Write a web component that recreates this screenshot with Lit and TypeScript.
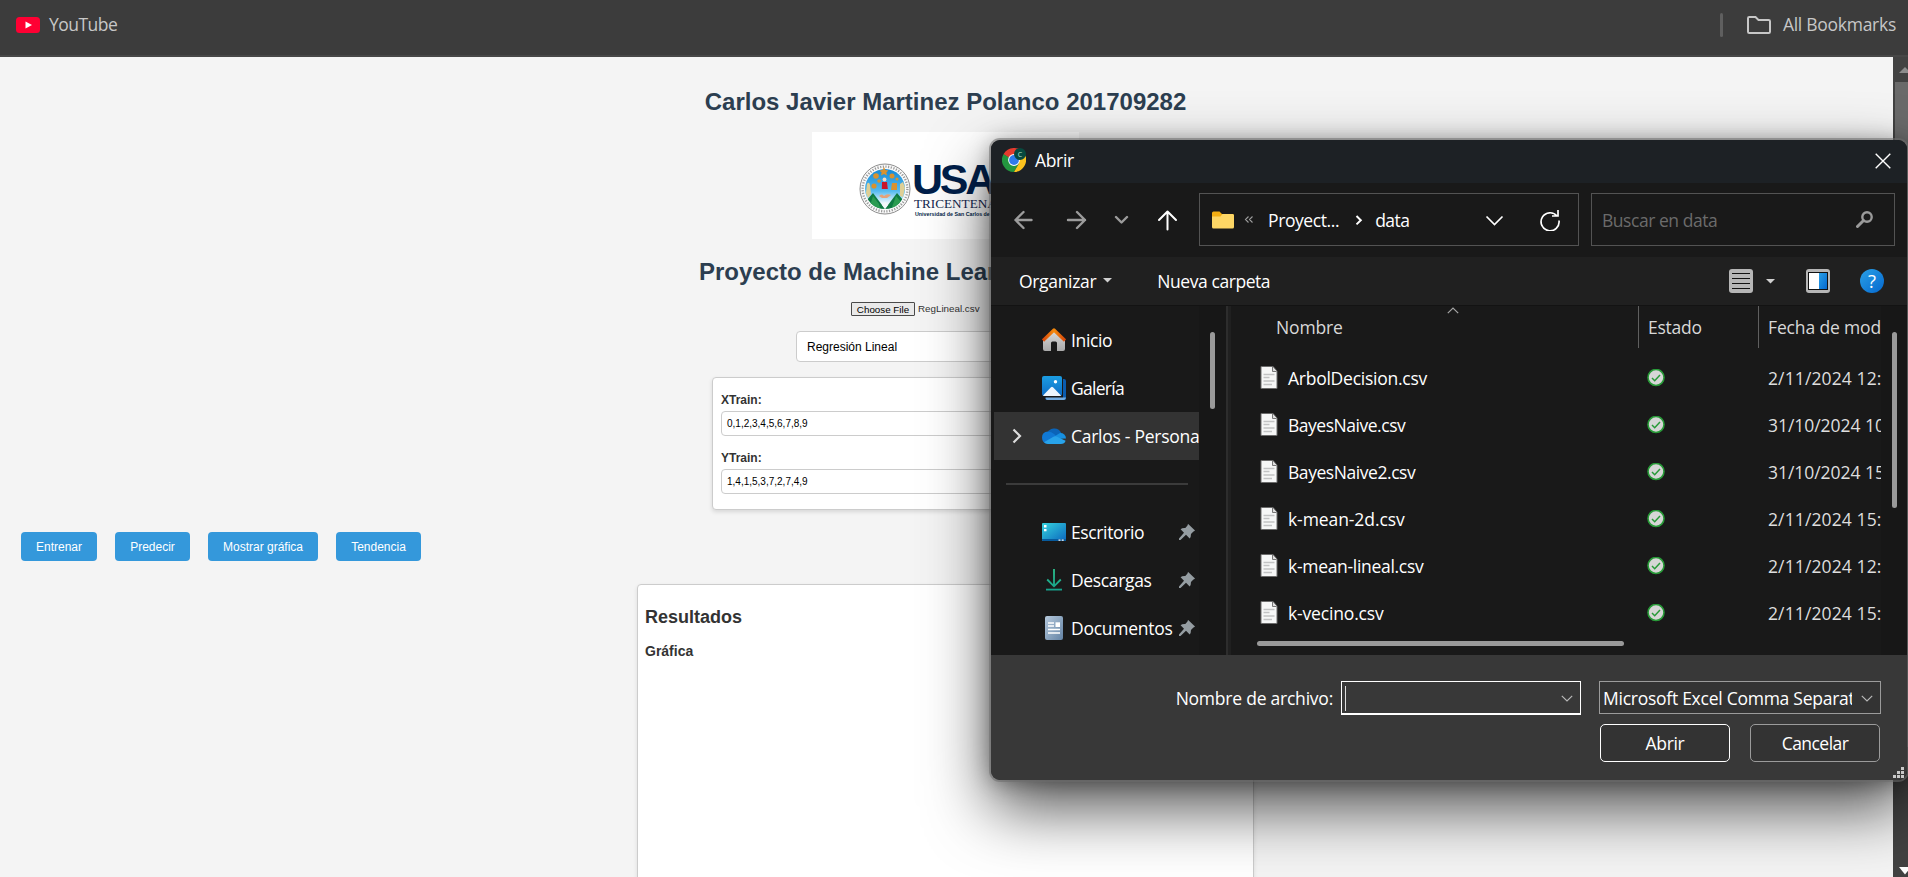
import { LitElement, html, css, svg } from "lit";
import { customElement } from "lit/decorators.js";
import { styleMap } from "lit/directives/style-map.js";

const UI = '17.5px "Open Sans"';
const ctx = document.createElement("canvas").getContext("2d")!;

/* Tracking that makes `sample` span `width` pixels of ink. */
const tracking = (sample: string, width: number, font = UI) => {
  ctx.font = font;
  const m = ctx.measureText(sample);
  const ink = m.actualBoundingBoxLeft + m.actualBoundingBoxRight;
  return ((width - ink) / (sample.length - 1)).toFixed(3) + "px";
};
const label = (text: string, width: number, sample = text) =>
  html`<span class="label" style=${styleMap({ letterSpacing: tracking(sample, width) })}>${text}</span>`;

const shared = css`
  :host { display: block; box-sizing: border-box; }
  *, *::before, *::after { box-sizing: border-box; }
  svg { display: block; flex: none; }
  .label { white-space: pre; }
`;

@customElement("bookmarks-bar")
class BookmarksBar extends LitElement {
  static styles = [shared, css`
    :host { height: 57px; background: #3c3c3c; border-bottom: 2px solid #474747; display: flex; align-items: center; padding: 0 12px 5px 16px; color: #c7c7c7; font: 17.5px/24px "Open Sans", sans-serif; }
    .yt { margin-right: 9px; }
    .spacer { flex: 1; }
    .sep { width: 3px; height: 24px; border-radius: 2px; background: #5f5f5f; margin-right: 24px; }
    .folder { margin-right: 12px; }
    .label { margin-top: -2px; }
  `];
  render() {
    return html`
      <svg class="yt" width="24" height="16" viewBox="0 0 24 16"><rect width="24" height="16" rx="3.5" fill="#ff0033"/><path d="M9.5 4.6v6.8L16 8z" fill="#fff"/></svg>
      ${label("YouTube", 68)}
      <span class="spacer"></span>
      <span class="sep"></span>
      <svg class="folder" width="24" height="18" viewBox="0 0 24 18" fill="none" stroke="#c7c7c7" stroke-width="2"><path d="M1 2.2Q1 1 2.2 1H8.5L11.5 4H21.6Q23 4 23 5.2V15.8Q23 17 21.8 17H2.2Q1 17 1 15.8Z"/></svg>
      ${label("All Bookmarks", 113)}`;
  }
}

@customElement("usac-logo")
class UsacLogo extends LitElement {
  static styles = [shared, css`
    :host { width: 267px; height: 107px; background: #fff; display: flex; padding: 31px 0 0 47px; overflow: hidden; }
    .words { margin-left: 3px; color: #001f4a; white-space: nowrap; }
    .big { font: bold 43px/33px "Liberation Sans", Arial, sans-serif; letter-spacing: -3.2px; margin-left: -2px; }
    .mid { font: 13.2px/12px "Liberation Serif", serif; color: #14284f; margin-top: 2px; }
    .small { font: bold 5.3px/8px "Liberation Sans", Arial, sans-serif; margin-left: 1px; }
  `];
  render() {
    return html`
      <svg width="52" height="52" viewBox="0 0 52 52">
        <defs><linearGradient id="s" x1="0" y1="0" x2="0" y2="1"><stop offset="0" stop-color="#1288d6"/><stop offset=".55" stop-color="#55baf0"/><stop offset=".85" stop-color="#eaf6fd"/></linearGradient>
        <clipPath id="c"><circle cx="26" cy="26" r="20"/></clipPath></defs>
        <circle cx="26" cy="26" r="25" fill="#fafafa" stroke="#8d8d8d" stroke-width="1"/>
        <circle cx="26" cy="26" r="22.4" fill="none" stroke="#9b9b9b" stroke-width="2.4" stroke-dasharray="1.2 1.5"/>
        <circle cx="26" cy="26" r="20" fill="url(#s)"/>
        <g clip-path="url(#c)"><path d="M2 44 14 30 26 46 38 30 50 44V52H2Z" fill="#0e7a43"/><path d="M14 33 20 41 23 52H8ZM37 33 43 40 41 50 33 44Z" fill="#2c9c52"/><path d="M23 42 26 39 29 42 26 46Z" fill="#f2f8fb"/></g>
        <g fill="#d9922f"><path d="m25 4 1.4 3 3 .4-2 2 .5 3-2.900-1.500L22 12.400l.6-3-2.200-2 3.200-.4z"/><circle cx="17" cy="13" r="2.800"/><circle cx="33" cy="13" r="2.500"/><circle cx="15" cy="23" r="2.600"/><path d="M33 20h5v7h-6z"/><circle cx="20" cy="18" r="1.800"/><circle cx="38" cy="16" r="1.500"/></g>
        <path d="M8 21q2-3 3 1l1 9-3 4-2-5zM41 21l3-2 2 6-2 9-3-1z" fill="#dfcf95"/>
        <circle cx="25.500" cy="16.500" r="1.900" fill="#f4dcc6"/><path d="M23 19h5l.8 7h-6z" fill="#c8152b"/><path d="M20 33q3-3 5 0 3-3 7-1l-4 3h-5z" fill="#e5a27a"/>
      </svg>
      <div class="words"><div class="big">USAC</div><div class="mid">TRICENTENARIA</div><div class="small">Universidad de San Carlos de Guatemala</div></div>`;
  }
}

@customElement("ml-page")
class MlPage extends LitElement {
  static styles = [shared, css`
    :host { flex: 1; background: #f4f4f4; padding-top: 31px; height: 820px; overflow: hidden; color: #333; font: 12px/14px "Liberation Sans", Arial, sans-serif; }
    h1, h2, h3, h4 { margin: 0; white-space: nowrap; }
    h1, h2 { color: #2c3e50; font-size: 24px; line-height: 28px; }
    h1 { width: 1891px; text-align: center; }
    .logo { margin: 16px 0 0 812px; }
    h2 { margin: 19px 0 0 699px; }
    .file { margin: 16px 0 0 851px; display: flex; gap: 3px; font-size: 9.8px; line-height: 14px; }
    .choose { border: 1px solid #4a4a4a; border-radius: 1px; background: #e9e9e9; color: #000; width: 64px; height: 14px; text-align: center; line-height: 13px; }
    .select { margin: 15px 0 0 796px; width: 299px; height: 31px; border: 1px solid #ccc; border-radius: 4px; background: #fff; color: #000; padding-left: 10px; line-height: 30px; }
    .form { margin: 15px 0 0 712px; width: 467px; height: 133px; border: 1px solid #ccc; border-radius: 4px; background: #fff; box-shadow: 0 2px 4px rgba(0,0,0,.12); padding: 15px 8px; }
    .field { margin-bottom: 15px; }
    .name { font-weight: bold; }
    .input { margin-top: 4px; height: 25px; border: 1px solid #ccc; border-radius: 4px; color: #000; font-size: 10px; line-height: 24px; padding-left: 5px; }
    .actions { margin: 22px 0 0 21px; display: flex; gap: 18px; }
    .btn { height: 29px; border-radius: 4px; background: #3498db; color: #fff; text-align: center; line-height: 30px; white-space: nowrap; }
    .results { margin: 23px 0 0 637px; width: 617px; height: 400px; background: #fff; border: 1px solid #ccc; border-radius: 4px; padding: 22px 7px; box-shadow: 0 2px 4px rgba(0,0,0,.1); }
    h3 { font-size: 18px; line-height: 20px; }
    h4 { font-size: 14px; line-height: 16px; margin-top: 16px; }
  `];
  actions = [["Entrenar", 76], ["Predecir", 75], ["Mostrar gráfica", 110], ["Tendencia", 85]] as const;
  fields = [["XTrain:", "0,1,2,3,4,5,6,7,8,9"], ["YTrain:", "1,4,1,5,3,7,2,7,4,9"]];
  render() {
    return html`
      <h1>Carlos Javier Martinez Polanco 201709282</h1>
      <usac-logo class="logo"></usac-logo>
      <h2>Proyecto de Machine Learning</h2>
      <div class="file"><span class="choose">Choose File</span><span>RegLineal.csv</span></div>
      <div class="select">Regresión Lineal</div>
      <div class="form">${this.fields.map(([n, v]) => html`<div class="field"><div class="name">${n}</div><div class="input">${v}</div></div>`)}</div>
      <div class="actions">${this.actions.map(([n, w]) => html`<div class="btn" style=${styleMap({ width: w + "px" })}>${n}</div>`)}</div>
      <div class="results"><h3>Resultados</h3><h4>Gráfica</h4></div>`;
  }
}

const icons = {
  home: svg`<defs><linearGradient id="hr" x2="1" y2="0"><stop stop-color="#d8480c"/><stop offset=".5" stop-color="#f58b0c"/><stop offset="1" stop-color="#d8480c"/></linearGradient><linearGradient id="hb" x2="0" y2="1"><stop stop-color="#dcdcdc"/><stop offset="1" stop-color="#a9a9a9"/></linearGradient></defs><path d="M1 12 12 2l11 10v9q0 2-2 2h-6v-8q0-1.500-1.500-1.500h-3Q9 13.500 9 15v8H3q-2 0-2-2z" fill="url(#hb)"/><path d="M1 12.500 12 2l11 10.500" fill="none" stroke="url(#hr)" stroke-width="3.200" stroke-linejoin="round"/>`,
  gallery: svg`<defs><linearGradient id="gg" x2="0" y2="1"><stop stop-color="#1b9de2"/><stop offset="1" stop-color="#0f6cc4"/></linearGradient></defs><path d="M21 3h1q2 0 2 2v17q0 2-2 2H5q-1.500 0-2-2h18z" fill="#0a5cb0"/><path d="M3.500 21.500H24q-.3 2.500-2.500 2.500H5.500q-1.700 0-2-2.500z" fill="#74ace0"/><rect width="21" height="21" rx="2" fill="#191919"/><rect width="20" height="20" rx="2" fill="url(#gg)"/><path d="M1 19.500 9 11.200q1-1 2 0l8 8.300q-.5.500-1.500.5h-15q-1 0-1.500-.5z" fill="#eef6fd"/><circle cx="13.500" cy="5.800" r="1.700" fill="#fff"/>`,
  cloud: svg`<path d="M5 10a7.600 7.600 0 0 1 14-1.500L20 14l-8 3z" fill="#0b64b8"/><path d="M6 7.500Q9.500 7.500 12 10l7 6-13 3.500Q0 19.500 0 13.500 0 8 6 7.500z" fill="#1078d4"/><path d="M24 14.500a5.500 5.500 0 0 0-6-5.500l-4 2.500-4 3.500z" fill="#1790e0"/><path d="M2 18.200 11 13q2-1.200 4-.2l8.600 4Q22.500 20 19 20H6q-2.500 0-4-1.800z" fill="#28a3ea"/>`,
  desktop: svg`<defs><linearGradient id="dg" x2="1" y2="1"><stop stop-color="#35d3de"/><stop offset="1" stop-color="#0b66bd"/></linearGradient></defs><rect y="3" width="24" height="18" rx="1" fill="url(#dg)"/><path d="M0 19h24v1q0 1-1 1H1q-1 0-1-1z" fill="#075a9c"/><path d="M2 5h2.500v2.500H2zM2 9h2.500v2.200H2zM16.500 19.500h2v1.300h-2zM19.700 19.500h2v1.300h-2z" fill="#fff"/>`,
  download: svg`<defs><linearGradient id="dl" gradientUnits="userSpaceOnUse" x1="0" y1="1" x2="0" y2="23"><stop stop-color="#2cc08c"/><stop offset="1" stop-color="#159f8b"/></linearGradient></defs><g fill="none" stroke="url(#dl)" stroke-width="1.800"><path d="M12 1v17M5.200 11.500 12 18.300l6.800-6.800"/><path d="M4 21.600h16"/></g>`,
  document: svg`<defs><linearGradient id="dc" x2="1" y2="1"><stop stop-color="#b6c9dc"/><stop offset="1" stop-color="#6383a5"/></linearGradient></defs><rect x="3" width="18" height="24" rx="2" fill="url(#dc)"/><path d="M6 7h6M6 10h6M6 13.500h12M6 17h12" stroke="#fff" stroke-width="1.300"/><path d="M13.500 6.300H18V11h-4.500z" fill="#fff"/>`,
};
type IconName = keyof typeof icons;

@customElement("open-dialog")
class OpenDialog extends LitElement {
  static styles = [shared, css`
    :host { width: 916px; height: 640px; border-radius: 9px; box-shadow: 0 0 0 2px rgba(110,110,110,.55), 0 28px 64px rgba(0,0,0,.68), 0 2px 21px rgba(0,0,0,.35); font: 17.5px/24px "Open Sans", sans-serif; color: #fff; }
    .frame { height: 640px; border-radius: 9px; overflow: hidden; background: #191919; display: flex; flex-direction: column; }
    .title { height: 43px; background: #1d2125; display: flex; padding: 8px 16px 0 11px; }
    .title .label { margin: 0 auto 0 9px; }
    .close { margin-top: 5px; }
    .nav { height: 74px; display: flex; padding: 10px 12px 0 23px; }
    .arrows { display: flex; align-items: center; height: 53px; width: 185px; }
    .box { height: 53px; border: 1px solid #535353; display: flex; align-items: center; }
    .address { width: 380px; padding: 0 18px 0 12px; }
    .search { width: 304px; margin-left: 12px; padding: 0 21px 0 10px; color: #6b6b6b; }
    .push { flex: 1; }
    .tools { height: 48px; background: #202020; display: flex; align-items: center; padding: 0 23px 0 28px; }
    .body { height: 350px; display: flex; border-top: 1px solid #131313; }
    .tree { width: 208px; padding: 10px 0 0 3px; overflow: hidden; }
    .node { height: 48px; display: flex; align-items: center; padding-left: 48px; position: relative; overflow: hidden; }
    .node .label { margin-left: 5px; }
    .node.on { background: #333; padding-left: 18px; }
    .node.on .cloud { margin-left: 20px; }
    .pin { position: absolute; left: 185px; top: 16px; }
    .rule { height: 48px; padding: 23px 11px 0 12px; }
    .rule::before { content: ""; display: block; height: 2px; background: #3b3b3b; }
    .treebar { width: 27px; padding: 26px 11px 0; background: #171717; }
    .thumb { width: 5px; height: 77px; background: #999; border-radius: 3px; }
    .split { width: 5px; background: #202020; border-left: 2px solid #2d2d2d; margin-right: 13px; }
    .list { width: 637px; overflow: hidden; padding-left: 17px; position: relative; }
    .row { display: grid; grid-template-columns: 27px 359px 121px 1fr; height: 47px; align-items: center; color: #dedede; }
    .row .fname { color: #fff; }
    .row svg.page { margin-bottom: 1px; margin-left: -1px; }
    .head { display: grid; grid-template-columns: 15px 362px 120px 1fr; height: 48px; color: #d8d8d8; }
    .head .cell { height: 42px; padding: 9px 0 0 0; }
    .head .cell.line { border-left: 1px solid #5f5f5f; padding-left: 9px; }
    .sort { position: absolute; left: 203px; top: 1px; }
    .hbar { position: absolute; left: 13px; bottom: 9px; width: 367px; height: 5px; border-radius: 3px; background: #999; }
    .listbar { width: 26px; padding: 26px 0 0 11px; background: #171717; }
    .listbar .thumb { height: 176px; }
    .foot { height: 125px; background: #383838; padding: 26px 26px 0 0; }
    .line1 { display: flex; justify-content: flex-end; align-items: flex-start; }
    .line1 > .label { line-height: 34px; margin-right: 8px; }
    .entry { width: 240px; height: 34px; border: 2px solid #fff; border-width: 1px 1px 2px; margin-right: 18px; display: flex; padding: 4px 7px 0 3px; }
    .cursor { width: 1px; height: 25px; background: #ddd; margin-right: auto; }
    .combo { width: 282px; height: 33px; border: 1px solid #9b9b9b; background: #333; display: flex; padding-left: 3px; line-height: 33px; }
    .clip { width: 249px; overflow: hidden; }
    .chev { margin-top: 9px; }
    .combo .chev { margin-top: 13px; margin-left: 9px; }
    .line2 { display: flex; justify-content: flex-end; gap: 20px; margin: 9px 1px 0 0; }
    .btn { width: 130px; height: 38px; border: 1px solid #9b9b9b; border-radius: 5px; background: #333; text-align: center; line-height: 37px; }
    .btn.main { border-color: #fff; }
    .grip { position: absolute; right: 3px; bottom: 2px; }
  `];
  node(icon: IconName, text: string, width: number, pinned = false) {
    return html`<div class="node">
      <svg width="24" height="24" viewBox="0 0 24 24">${icons[icon]}</svg>${label(text, width)}
      ${pinned ? html`<svg class="pin" width="16" height="16" viewBox="0 0 16 16"><path d="M9.200 0 16 6.600q-.5.900-1.600.8L12 10q0 3-1.300 4.400L7 10.800 1.500 16H0v-1.500L5 8.700 1.600 5.300Q3 3.800 6.300 4L8.500 1.500Q8.400.500 9.200 0z" fill="#959da2"/></svg>` : ""}</div>`;
  }
  row(name: string, width: number, date: string, dw: number, sample: string) {
    return html`<div class="row">
      <svg class="page" width="18" height="23" viewBox="0 0 18 23"><path d="M1 .5h12l4 4.500v17.500H1z" fill="#f6f7f7" stroke="#6b6b6b"/><path d="M12.500 1v4.500h4" fill="#ddd" stroke="#777"/><path d="M3.500 8.500h11M3.500 11.500h6M3.500 15h11M3.500 18.500h8.500" stroke="#c2c3c4" stroke-width="1.300"/></svg>
      <span class="fname">${label(name, width)}</span>
      <svg width="18" height="18" viewBox="0 0 18 18"><circle cx="9" cy="8.500" r="8" fill="#d6d6d6" stroke="#289a38" stroke-width="1.600"/><path d="m5 9 2.700 2.700L13 5.900" fill="none" stroke="#289a38" stroke-width="1.500"/></svg>
      ${label(date, dw, sample)}</div>`;
  }
  chevron = html`<svg class="chev" width="12" height="7" viewBox="0 0 12 7"><path d="m.8.800 5.200 5.200L11.200.800" fill="none" stroke="#b9b9b9" stroke-width="1.200"/></svg>`;
  render() {
    return html`<div class="frame">
      <div class="title">
        <svg width="24" height="24" viewBox="0 0 24 24"><path d="M12 12 1.600 6A12 12 0 0 1 22.400 6z" fill="#e33b2e"/><path d="M12 12 1.600 6A12 12 0 0 0 12 24l5.200-9z" fill="#23963f"/><path d="M12 12 22.400 6A12 12 0 0 1 12 24l5.200-9z" fill="#fcc31e"/><path d="M12 6.500h10.600L24 10H14z" fill="#fcc31e"/><path d="M1.600 6 12 6.500 8 10z" fill="#e33b2e"/><circle cx="12" cy="12" r="5.900" fill="#fff"/><circle cx="12" cy="12" r="4.900" fill="#2f7bea"/><circle cx="18" cy="6" r="6" fill="#07493f"/><text x="18" y="8.500" font-size="7" fill="#b9e0d2" text-anchor="middle" font-family="Open Sans">C</text></svg>
        ${label("Abrir", 39)}
        <svg class="close" width="16" height="16" viewBox="0 0 16 16"><path d="m.7.700 14.600 14.600M15.300.700.700 15.300" stroke="#fff" stroke-width="1.400"/></svg>
      </div>
      <div class="nav">
        <div class="arrows">
          <svg width="164" height="22" viewBox="0 0 164 22" fill="none" stroke="#9c9c9c" stroke-width="2.400" stroke-linecap="round" stroke-linejoin="round"><path d="M9.500 3 1.500 11l8 8M1.500 11h16M63 3l8 8-8 8M71 11H54M102 8l5.500 5.500 5.500-5.500"/><path d="M153.500 20.500V2.500M145 11l8.500-8.500L162 11" stroke="#fff" stroke-width="2"/></svg>
        </div>
        <div class="box address">
          <svg width="22" height="18" viewBox="0 0 22 18"><path d="M0 2q0-1.500 1.500-1.500h6L10 3h10.500Q22 3 22 4.500V9H0z" fill="#f4ae12"/><path d="M0 5.500h8.500L10.500 3h10Q22 3 22 4.500v11.500q0 1.500-1.500 1.500h-19Q0 17.500 0 16z" fill="#fdd665"/></svg>
          <svg width="34" height="10" viewBox="0 0 34 10" fill="none" stroke="#9c9c9c" stroke-width="1.100"><path d="m14.500 1.500-3 3 3 3M18.500 1.500l-3 3 3 3"/></svg>
          ${label("Proyect...", 70)}
          <svg width="36" height="12" viewBox="0 0 36 12" fill="none" stroke="#fff" stroke-width="2"><path d="m17.500 2 4.300 4.200-4.300 4.200"/></svg>
          ${label("data", 34)}
          <span class="push"></span>
          <svg width="75" height="22" viewBox="0 0 75 22" fill="none" stroke="#fff" stroke-width="1.700"><path d="m1.500 7.500 8 8 8-8"/><path d="M72 7A9 9 0 1 0 74 11.500M73 1v6h-6"/></svg>
        </div>
        <div class="box search">${label("Buscar en data", 114)}<span class="push"></span>
          <svg width="17" height="17" viewBox="0 0 17 17" fill="none" stroke="#9a9a9a"><circle cx="11" cy="6" r="4.700" stroke-width="2.400"/><path d="m7.500 9.500-6 6" stroke-width="3" stroke-linecap="round"/></svg></div>
      </div>
      <div class="tools">
        ${label("Organizar", 76.5)}
        <svg width="61" height="10" viewBox="0 0 61 10"><path d="M7 2h9l-4.500 4.500z" fill="#d0d0d0"/></svg>
        ${label("Nueva carpeta", 111.5)}
        <span class="push"></span>
        <svg width="156" height="24" viewBox="0 0 156 24">
          <defs><linearGradient id="q" x2="1" y2="1"><stop stop-color="#2aa0e6"/><stop offset="1" stop-color="#0568cf"/></linearGradient></defs>
          <rect x="1" width="24" height="24" rx="3" fill="#b6b6b6"/><path d="M4 4.500h18M4 9.500h18M4 14.500h18M4 19.500h18" stroke="#111" stroke-width="1.200"/>
          <path d="M38 10h9l-4.500 4.500z" fill="#d0d0d0"/>
          <rect x="78" width="24" height="24" rx="3" fill="#b6b6b6"/><rect x="80.500" y="3.500" width="19" height="17" fill="#fff" stroke="#111"/><path d="M91 4h8v16h-8z" fill="url(#q)"/>
          <circle cx="144" cy="12" r="12" fill="url(#q)"/><text x="144" y="18.500" font-size="18.500" fill="#fff" text-anchor="middle" font-family="Open Sans" font-weight="500">?</text>
        </svg>
      </div>
      <div class="body">
        <div class="tree">
          ${this.node("home", "Inicio", 40)}${this.node("gallery", "Galería", 52)}
          <div class="node on"><svg width="10" height="16" viewBox="0 0 10 16"><path d="m1.500 1.500 6.500 6.500-6.500 6.500" fill="none" stroke="#ddd" stroke-width="2.200"/></svg><svg class="cloud" width="24" height="24" viewBox="0 0 24 24">${icons.cloud}</svg>${label("Carlos - Personal", 127, "Carlos - Persona")}</div>
          <div class="rule"></div>
          ${this.node("desktop", "Escritorio", 72, true)}${this.node("download", "Descargas", 79.5, true)}${this.node("document", "Documentos", 100.5, true)}
        </div>
        <div class="treebar"><div class="thumb"></div></div>
        <div class="split"></div>
        <div class="list">
          <svg class="sort" width="12" height="7" viewBox="0 0 12 7"><path d="M.8 6.200 6 1l5.200 5.200" fill="none" stroke="#a5a5a5" stroke-width="1.200"/></svg>
          <div class="head"><span></span><span class="cell">${label("Nombre", 65)}</span><span class="cell line">${label("Estado", 52.5)}</span><span class="cell line">${label("Fecha de modificación", 111.5, "Fecha de mod")}</span></div>
          ${this.row("ArbolDecision.csv", 139.5, "2/11/2024 12:04", 112.8, "2/11/2024 12:")}
          ${this.row("BayesNaive.csv", 117, "31/10/2024 10:20", 92.5, "31/10/2024")}
          ${this.row("BayesNaive2.csv", 127, "31/10/2024 15:10", 92.5, "31/10/2024")}
          ${this.row("k-mean-2d.csv", 116, "2/11/2024 15:31", 112.8, "2/11/2024 15:")}
          ${this.row("k-mean-lineal.csv", 135, "2/11/2024 12:45", 112.8, "2/11/2024 12:")}
          ${this.row("k-vecino.csv", 95, "2/11/2024 15:52", 112.8, "2/11/2024 15:")}
          <div class="hbar"></div>
        </div>
        <div class="listbar"><div class="thumb"></div></div>
      </div>
      <div class="foot">
        <div class="line1">${label("Nombre de archivo:", 156)}
          <div class="entry"><span class="cursor"></span>${this.chevron}</div>
          <div class="combo"><div class="clip">${label("Microsoft Excel Comma Separated", 250.5, "Microsoft Excel Comma Separat")}</div>${this.chevron}</div></div>
        <div class="line2"><div class="btn main">${label("Abrir", 39)}</div><div class="btn">${label("Cancelar", 66)}</div></div>
      </div>
      <svg class="grip" width="11" height="11" viewBox="0 0 11 11" fill="#c8c8c8"><path d="M8 0h3v3H8zM4 4h3v3H4zM8 4h3v3H8zM0 8h3v3H0zM4 8h3v3H4zM8 8h3v3H8z"/></svg>
    </div>`;
  }
}

@customElement("app-root")
class AppRoot extends LitElement {
  static styles = [shared, css`
    :host { width: 1908px; height: 877px; position: relative; overflow: hidden; }
    .view { display: flex; }
    .bar { width: 15px; height: 820px; background: #424242; display: flex; flex-direction: column; padding: 10px 0 2px; overflow: hidden; }
    .bar svg { margin-left: 6px; }
    .bar .thumb { flex: 1; margin: 9px 0 120px 2px; background: #6a6a6a; }
    .dialog { position: absolute; left: 991px; top: 140px; }
  `];
  render() {
    return html`<bookmarks-bar></bookmarks-bar>
      <div class="view"><ml-page></ml-page>
        <div class="bar"><svg width="12" height="6" viewBox="0 0 12 6"><path d="M0 6 6 0l6 6z" fill="#8c8c8c"/></svg><div class="thumb"></div><svg width="12" height="8" viewBox="0 0 12 8"><path d="M0 0h12L6 7.500z" fill="#fff"/></svg></div></div>
      <open-dialog class="dialog"></open-dialog>`;
  }
}
